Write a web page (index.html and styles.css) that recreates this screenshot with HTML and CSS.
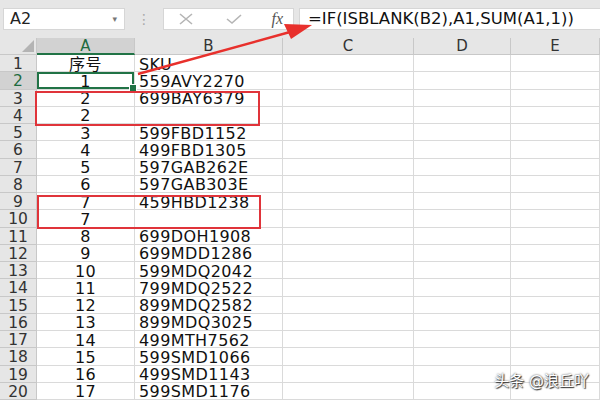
FILE: index.html
```html
<!DOCTYPE html>
<html>
<head>
    <meta charset="UTF-8">
    <title>序号</title>
    <link rel="stylesheet" href="styles.css">
</head>
<body>
	<div class="app">
		<div class="fbar">
			<div class="namebox"><span>A2</span><i class="drop">▾</i></div>
			<div class="dots">⋮</div>
			<div class="btns">
				<svg width="20" height="14" viewBox="0 0 20 14"><path d="M4 2 L16 12 M16 2 L4 12" stroke="#b5b5b5" stroke-width="1.6" fill="none"/></svg>
				<svg width="20" height="14" viewBox="0 0 20 14"><path d="M3 7 L8 11 L17 3" stroke="#b5b5b5" stroke-width="1.6" fill="none"/></svg>
				<span class="fx">fx</span>
			</div>
			<div class="formula">=IF(ISBLANK(B2),A1,SUM(A1,1))</div>
		</div>
		<div class="sheet" id="sheet">
			<div class="corner"></div>
			<div class="colh sel">A</div>
			<div class="colh">B</div>
			<div class="colh">C</div>
			<div class="colh">D</div>
			<div class="colh">E</div>
		</div>
		<div class="mark mark1"></div>
		<div class="mark mark2"></div>
		<svg class="arrow" width="600" height="400" viewBox="0 0 600 400">
			<line x1="138" y1="74" x2="290" y2="32" stroke="#e8302c" stroke-width="2.4"/>
			<polygon points="312,25 284,24 291,39" fill="#e8302c"/>
		</svg>
		<div class="wm">头条 @浪丘吖</div>
	</div>
	<script type="text/javascript">
		var rows = [
			["序号","SKU"],["1","559AVY2270"],["2","699BAY6379"],["2",""],
			["3","599FBD1152"],["4","499FBD1305"],["5","597GAB262E"],["6","597GAB303E"],
			["7","459HBD1238"],["7",""],["8","699DOH1908"],["9","699MDD1286"],
			["10","599MDQ2042"],["11","799MDQ2522"],["12","899MDQ2582"],["13","899MDQ3025"],
			["14","499MTH7562"],["15","599SMD1066"],["16","499SMD1143"],["17","599SMD1176"]
		];
		var sheet = document.getElementById("sheet");
		var html = "";
		for(var r = 0;r < rows.length;r++){
			html += '<div class="rowh' + (r===1?' sel':'') + '">' + (r+1) + '</div>';
			html += '<div class="cell num' + (r===1?' active':'') + '">' + rows[r][0] + '</div>';
			html += '<div class="cell">' + rows[r][1] + '</div>';
			html += '<div class="cell"></div><div class="cell"></div><div class="cell"></div>';
		}
		sheet.insertAdjacentHTML("beforeend", html);
	</script>
</body>
</html>
```
FILE: styles.css
```css
*{
	padding: 0;
	margin: 0;
	box-sizing: border-box;
}
body{
	width: 600px;
	height: 400px;
	overflow: hidden;
	background: #fff;
	font-family: "DejaVu Sans", "Noto Sans CJK SC", sans-serif;
}
.app{
	position: relative;
	width: 600px;
	height: 400px;
	overflow: hidden;
}
.fbar{
	height: 38px;
	background: #e6e6e6;
	display: flex;
	align-items: center;
	padding: 0 0 1px 3px;
}
.namebox{
	width: 122px;
	height: 22px;
	background: #fff;
	border: 1px solid #d6d6d6;
	display: flex;
	align-items: center;
	justify-content: space-between;
	padding: 0 7px 0 6px;
	font-size: 16px;
	color: #222;
}
.drop{
	font-style: normal;
	font-size: 9px;
	color: #777;
}
.dots{
	width: 38px;
	text-align: center;
	color: #aaa;
	font-size: 14px;
}
.btns{
	width: 131px;
	height: 22px;
	background: #fff;
	border: 1px solid #d6d6d6;
	display: flex;
	align-items: center;
	justify-content: space-between;
	padding: 0 10px 0 12px;
}
.fx{
	font-family: "Liberation Serif", serif;
	font-style: italic;
	font-size: 16px;
	color: #555;
}
.formula{
	flex: 1;
	height: 22px;
	margin-left: 5px;
	background: #fff;
	border: 1px solid #d6d6d6;
	border-right: none;
	padding-left: 8px;
	font-size: 16.5px;
	line-height: 20px;
	color: #111;
	white-space: nowrap;
}
.sheet{
	display: grid;
	grid-template-columns: 37px 98px 148px 131px 97px 89px;
	grid-template-rows: 17px repeat(20, 17.25px);
}
.corner{
	background: #e6e6e6;
	border-right: 1px solid #c8c8c8;
	border-bottom: 1px solid #c8c8c8;
	position: relative;
}
.corner:after{
	content: "";
	position: absolute;
	right: 2px;
	bottom: 2px;
	border-left: 12px solid transparent;
	border-bottom: 12px solid #b4b4b4;
}
.colh{
	background: #e6e6e6;
	border-right: 1px solid #c8c8c8;
	border-bottom: 1px solid #c8c8c8;
	text-align: center;
	font-size: 15px;
	line-height: 16px;
	color: #333;
}
.colh.sel{
	background: #d2d2d2;
	border-bottom: 2px solid #217346;
	color: #1e6b40;
}
.rowh{
	background: #e6e6e6;
	border-right: 1px solid #c8c8c8;
	border-bottom: 1px solid #c8c8c8;
	text-align: center;
	font-size: 15.5px;
	line-height: 16px;
	padding-top: 1px;
	color: #333;
}
.rowh.sel{
	background: #d2d2d2;
	color: #1e6b40;
}
.cell{
	border-right: 1px solid #dadada;
	border-bottom: 1px solid #dadada;
	font-size: 16px;
	letter-spacing: 0.4px;
	line-height: 16px;
	padding: 1.5px 0 0 4px;
	color: #111;
	white-space: nowrap;
}
.num{
	text-align: center;
	padding-left: 0;
}
.active{
	box-shadow: inset 0 0 0 2px #217346;
	position: relative;
}
.active:after{
	content: "";
	position: absolute;
	right: -3px;
	bottom: -3px;
	width: 6px;
	height: 6px;
	background: #217346;
	border: 1px solid #fff;
}
.mark{
	position: absolute;
	border: 2px solid #e0343a;
}
.mark1{
	left: 35px;
	top: 91px;
	width: 225px;
	height: 35px;
}
.mark2{
	left: 37px;
	top: 195px;
	width: 224px;
	height: 34px;
}
.arrow{
	position: absolute;
	left: 0;
	top: 0;
}
.wm{
	position: absolute;
	right: 11px;
	bottom: 10px;
	font-size: 15px;
	color: #fff;
	text-shadow: 0 0 2px #333, 1px 1px 1px #333;
}
```
